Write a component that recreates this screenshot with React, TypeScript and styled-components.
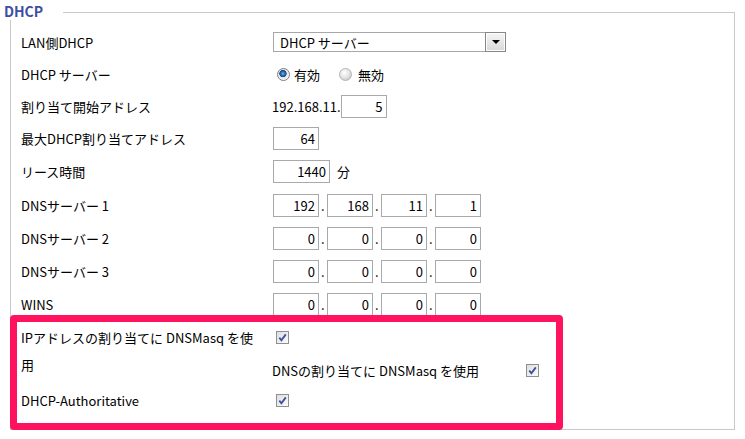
import styled, { createGlobalStyle } from "styled-components";

const GlobalStyle = createGlobalStyle`
  html, body {
    margin: 0;
    padding: 0;
    background: #fff;
  }
  body {
    font-family: "Noto Sans CJK JP", "Noto Sans", sans-serif;
    font-size: 13px;
    color: #000;
  }
`;

const Page = styled.div`
  position: relative;
  width: 745px;
  height: 439px;
  padding-right: 10px;
  box-sizing: border-box;
`;

const Header = styled.div`
  display: flex;
  height: 20px;
`;

const Legend = styled.div`
  flex: 0 0 63px;
  box-sizing: border-box;
  padding-left: 4px;
  font-size: 14px;
  font-weight: 700;
  line-height: 22px;
  color: #3b4fa3;
`;

const Rule = styled.div`
  flex: 1;
  margin-top: 12px;
  height: 7px;
  border-top: 1px solid #c9c9c9;
  border-right: 1px solid #c9c9c9;
`;

const Body = styled.div`
  margin-left: 10px;
  height: 410px;
  box-sizing: border-box;
  padding-top: 6px;
  border: 1px solid #c9c9c9;
  border-top: none;
`;

const Row = styled.div<{ $h: number; $top?: number }>`
  display: flex;
  align-items: center;
  height: ${({ $h }) => $h}px;
  margin-top: ${({ $top = 0 }) => $top}px;
`;

const Label = styled.div<{ $lh?: number }>`
  flex: 0 0 261px;
  box-sizing: border-box;
  padding-left: 10px;
  line-height: ${({ $lh }) => ($lh ? `${$lh}px` : "normal")};
  align-self: ${({ $lh }) => ($lh ? "flex-start" : "center")};
`;

const Value = styled.div`
  display: flex;
  align-items: center;
`;

const Stack = styled.div`
  display: flex;
  flex-direction: column;
  align-self: flex-start;
`;

const Line = styled.div<{ $h: number }>`
  display: flex;
  align-items: center;
  justify-content: space-between;
  height: ${({ $h }) => $h}px;
  width: 267px;
`;

const Select = styled.div`
  display: flex;
  align-items: center;
  justify-content: space-between;
  margin-left: 1px;
  width: 233px;
  height: 20px;
  box-sizing: border-box;
  border: 1px solid #a8a8a8;
  padding-left: 6px;
`;

const SelectButton = styled.span`
  display: flex;
  align-items: center;
  justify-content: center;
  width: 21px;
  height: 20px;
  margin: -1px -1px -1px 0;
  box-sizing: border-box;
  border: 1px solid #868686;
  box-shadow: inset 0 0 0 1px #fdfdfd;
  background: linear-gradient(#f5f5f5, #d8d8d8);

  &::after {
    content: "";
    border-left: 4px solid transparent;
    border-right: 4px solid transparent;
    border-top: 4px solid #000;
  }
`;

const Radio = styled.span<{ $on?: boolean }>`
  display: inline-block;
  width: 13px;
  height: 13px;
  box-sizing: border-box;
  border-radius: 50%;
  border: 1px solid ${({ $on }) => ($on ? "#7d7d7d" : "#b3b3b3")};
  margin: 0 ${({ $on }) => ($on ? 4 : 6)}px 0 ${({ $on }) => ($on ? 5 : 19)}px;
  background: ${({ $on }) =>
    $on
      ? "radial-gradient(circle at 45% 42%, #8cc2f0 0, #2f74bb 1.6px, #154a86 3.4px, #e4e4e4 3.9px, #f6f6f6 6px)"
      : "radial-gradient(circle at 40% 35%, #ffffff 0, #e9e9e9 4px, #d2d2d2 7px)"};
`;

const Field = styled.input<{ $w: number }>`
  width: ${({ $w }) => $w}px;
  height: 23px;
  box-sizing: border-box;
  border: 1px solid #a9a9a9;
  padding: 0 3px 0 0;
  margin: 0;
  text-align: right;
  font-family: inherit;
  font-size: 13px;
  color: #000;
  background: #fff;
  outline: none;
`;

const Boxes = styled.div`
  display: flex;
  align-items: center;
  margin-left: 1px;
`;

const Dot = styled.span`
  width: 8px;
  padding-left: 2px;
  box-sizing: border-box;
`;

const Unit = styled.span`
  margin-left: 7px;
`;

const Check = styled.span<{ $left?: number }>`
  display: inline-flex;
  align-items: center;
  justify-content: center;
  width: 13px;
  height: 13px;
  box-sizing: border-box;
  margin-left: ${({ $left = 0 }) => $left}px;
  border: 1px solid #8f8f8f;
  background: linear-gradient(135deg, #dedede, #fbfbfb);
`;

const Highlight = styled.div`
  position: absolute;
  left: 10px;
  top: 315px;
  width: 553px;
  height: 115px;
  box-sizing: border-box;
  border: 7px solid #ff135f;
  border-radius: 4px;
  pointer-events: none;
`;

const Tick = () => (
  <svg width="11" height="11" viewBox="0 0 11 11">
    <path d="M2.3 5.6 L4.4 8.2 L8.8 2.4" fill="none" stroke="#3c4e9c" strokeWidth="1.8" />
  </svg>
);

const Box = ({ w = 46, v }: { w?: number; v: string }) => <Field $w={w} value={v} readOnly />;

const Ip = ({ parts }: { parts: string[] }) => (
  <Boxes>
    {parts.map((p, i) => (
      <Value key={i}>
        <Box v={p} />
        {i < parts.length - 1 && <Dot>.</Dot>}
      </Value>
    ))}
  </Boxes>
);

export default function App() {
  return (
    <Page>
      <GlobalStyle />
      <Header>
        <Legend>DHCP</Legend>
        <Rule />
      </Header>
      <Body>
        <Row $h={32}>
          <Label>LAN側DHCP</Label>
          <Select>
            DHCP サーバー
            <SelectButton />
          </Select>
        </Row>
        <Row $h={32}>
          <Label>DHCP サーバー</Label>
          <Value>
            <Radio $on />
            有効
            <Radio />
            無効
          </Value>
        </Row>
        <Row $h={32}>
          <Label>割り当て開始アドレス</Label>
          <Value>
            192.168.11.
            <Box v="5" />
          </Value>
        </Row>
        <Row $h={33}>
          <Label>最大DHCP割り当てアドレス</Label>
          <Boxes>
            <Box v="64" />
          </Boxes>
        </Row>
        <Row $h={33}>
          <Label>リース時間</Label>
          <Boxes>
            <Box w={57} v="1440" />
            <Unit>分</Unit>
          </Boxes>
        </Row>
        <Row $h={34}>
          <Label>DNSサーバー 1</Label>
          <Ip parts={["192", "168", "11", "1"]} />
        </Row>
        <Row $h={33}>
          <Label>DNSサーバー 2</Label>
          <Ip parts={["0", "0", "0", "0"]} />
        </Row>
        <Row $h={33}>
          <Label>DNSサーバー 3</Label>
          <Ip parts={["0", "0", "0", "0"]} />
        </Row>
        <Row $h={33}>
          <Label>WINS</Label>
          <Ip parts={["0", "0", "0", "0"]} />
        </Row>
        <Row $h={65} $top={3}>
          <Label $lh={27}>
            IPアドレスの割り当てに DNSMasq を使
            <br />用
          </Label>
          <Stack>
            <Line $h={27}>
              <Check $left={4}>
                <Tick />
              </Check>
            </Line>
            <Line $h={38}>
              DNSの割り当てに DNSMasq を使用
              <Check>
                <Tick />
              </Check>
            </Line>
          </Stack>
        </Row>
        <Row $h={22}>
          <Label>DHCP-Authoritative</Label>
          <Check $left={4}>
            <Tick />
          </Check>
        </Row>
      </Body>
      <Highlight />
    </Page>
  );
}
